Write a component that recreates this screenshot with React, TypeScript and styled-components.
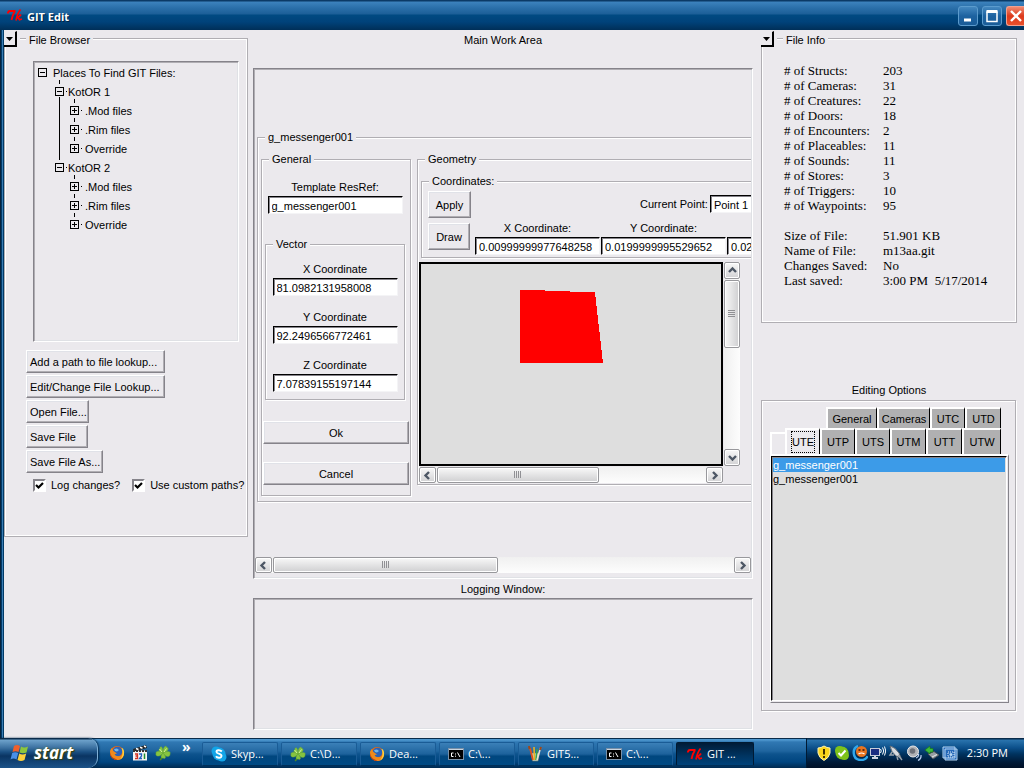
import React from 'react';
import styled, { createGlobalStyle, css } from 'styled-components';

const face = '#ebe9ed';
const shade = '#b0aeb3';
const dark = '#85838a';

const GlobalStyle = createGlobalStyle`
  * { box-sizing: border-box; }
  body {
    margin: 0;
    background: ${face};
    color: #000;
    font: 11px/14px "Liberation Sans", Arial, sans-serif;
  }
  button, input, select { font: inherit; color: inherit; border-radius: 0; margin: 0; }
  ul { list-style: none; margin: 0; padding: 0; }
`;

const Desktop = styled.div`
  display: flex;
  flex-direction: column;
  min-height: 100vh;
  overflow: hidden;
`;

/* ---------- window chrome ---------- */

const TitleBar = styled.header`
  display: flex;
  align-items: center;
  height: 30px;
  padding-left: 7px;
  gap: 4px;
  color: #fff;
  background: linear-gradient(#0b3a66 0 1px, #3c82bd 2px, #2a6fa9 8px, #1c5f98 14px, #004a82 15px, #00427a 22px, #002f58 30px);
`;

const Title = styled.h1`
  flex: 1;
  margin: 0;
  font: bold 11px/16px "Open Sans", "Noto Sans", sans-serif;
  padding-top: 4px;
  text-shadow: 1px 1px 0 #002447;
`;

const Caption = styled.div`
  display: flex;
  gap: 4px;
  padding-top: 2px;
`;

const CaptionButton = styled.button<{ $close?: boolean }>`
  display: grid;
  place-items: center;
  width: ${p => (p.$close ? 18 : 20)}px;
  height: 20px;
  padding: 0;
  border: 1px solid ${p => (p.$close ? '#f0a090' : '#5b9bcd')};
  border-radius: 3px;
  background: ${p => (p.$close ? 'linear-gradient(#f08a70, #dc3a1c 50%, #e8502c)' : 'linear-gradient(#4488c0, #1d62a0 50%, #1a5c98)')};
  ${p => p.$close && css`border-right: 0; border-radius: 3px 0 0 3px;`}
`;

const Workspace = styled.main`
  flex: 1;
  display: grid;
  grid-template-columns: 244px minmax(0, 1fr) 256px;
  padding: 0 7px 0 4px;
  background: linear-gradient(to right, #08223c 0 1px, #003a66 1px 2px, #3a7cb3 2px 3px, #003a66 3px 4px, ${face} 4px);
`;

/* ---------- shared widgets ---------- */

const Group = styled.fieldset<{ $width?: number }>`
  min-width: 0;
  margin: 0;
  padding: 0;
  ${p => p.$width && css`width: ${p.$width}px;`}
  border: 1px solid ${shade};
  box-shadow: 1px 1px 0 #fff, inset 1px 1px 0 #fff;
  > legend {
    margin-left: 7px;
    padding: 0 3px;
    line-height: 13px;
    background: ${face};
  }
`;

const PanelGroup = styled(Group)`
  box-shadow: inset 0 0 0 1px #fff;
  > legend {
    margin-left: 21px;
    padding: 4px 3px 0;
  }
`;

const PanelShell = styled.section`
  position: relative;
`;

const Collapse = styled.button`
  position: absolute;
  top: 1px;
  left: 0;
  display: grid;
  place-items: center;
  width: 13px;
  height: 16px;
  padding: 0;
  border: solid;
  border-width: 1px 2px 2px 0;
  border-color: ${face} #000 #000 #fff;
  background: ${face};
  box-shadow: 3px 3px 0 ${face};
`;

const TkButton = styled.button<{ $width?: number; $tall?: boolean; $center?: boolean }>`
  width: ${p => (p.$width ? `${p.$width}px` : 'auto')};
  height: ${p => (p.$tall ? 27 : 23)}px;
  padding: 0 3px;
  text-align: ${p => (p.$center ? 'center' : 'left')};
  white-space: nowrap;
  background: ${face};
  border: 1px solid;
  border-color: #fff ${dark} ${dark} #fff;
  box-shadow: inset -1px -1px 0 ${shade}, inset 1px 1px 0 #e0e2e8;
`;

const entry = css`
  height: 18px;
  padding: 1px 2px 0 3px;
  background: #fff;
  border: 1px solid;
  border-color: #000 #f4f4f6 #f4f4f6 #000;
  box-shadow: inset 1px 1px 0 ${dark};
  outline: none;
  appearance: none;
`;

const Entry = styled.input<{ $width: number }>`
  ${entry}
  width: ${p => p.$width}px;
`;

const Picker = styled.select`
  ${entry}
  width: 75px;
`;

const Sunken = styled.div`
  padding: 1px;
  border: 1px solid;
  border-color: ${dark} #fff #fff ${dark};
  box-shadow: inset 1px 1px 0 ${shade}, inset -1px -1px 0 #dfe1e5;
`;

const Heading = styled.h2`
  margin: 0;
  font-size: 11px;
  font-weight: normal;
  line-height: 14px;
  text-align: center;
`;

const Field = styled.label`
  display: flex;
  flex-direction: column;
  align-items: center;
  gap: 2px;
`;

/* ---------- scroll bar ---------- */

const Bar = styled.div<{ $vertical?: boolean }>`
  display: flex;
  gap: 1px;
  flex-direction: ${p => (p.$vertical ? 'column' : 'row')};
  ${p => (p.$vertical ? 'width: 16px;' : 'height: 16px;')}
  background: linear-gradient(${p => (p.$vertical ? 'to right' : 'to bottom')}, #f0f0f0, #fdfdfd);
`;

const barPart = css`
  display: grid;
  place-items: center;
  padding: 0;
  border: 1px solid #98989c;
  border-radius: 2px;
  box-shadow: inset 0 0 0 1px #fff;
`;

const Arrow = styled.button<{ $vertical: boolean }>`
  ${barPart}
  width: ${p => (p.$vertical ? 16 : 17)}px;
  height: ${p => (p.$vertical ? 17 : 16)}px;
  flex: none;
  background: linear-gradient(#f8f8f8, #d2d2d4);
`;

const Thumb = styled.div<{ $size: number; $vertical?: boolean }>`
  ${barPart}
  flex: 0 0 ${p => p.$size}px;
  background: linear-gradient(${p => (p.$vertical ? 'to right' : 'to bottom')}, #f8f8f8, #cfcfd1);
`;

const Track = styled.div`
  flex: 1;
`;

const arrows: Record<string, string> = {
  left: 'M6 1 2.500 4.500 6 8',
  right: 'M3 1 6.500 4.500 3 8',
  up: 'M1 6 4.500 2.500 8 6',
  down: 'M1 3 4.500 6.500 8 3',
};

function ArrowButton({ dir }: { dir: string }) {
  return (
    <Arrow type="button" $vertical={dir === 'up' || dir === 'down'} aria-label={`Scroll ${dir}`}>
      <svg width="9" height="9" viewBox="0 0 9 9">
        <path d={arrows[dir]} fill="none" stroke="#4d5765" strokeWidth="2.400" />
      </svg>
    </Arrow>
  );
}

function ScrollBar({ vertical, thumb }: { vertical?: boolean; thumb: number }) {
  return (
    <Bar $vertical={vertical}>
      <ArrowButton dir={vertical ? 'up' : 'left'} />
      <Thumb $vertical={vertical} $size={thumb}>
        <svg width="8" height="8" viewBox="0 0 8 8" shapeRendering="crispEdges">
          <path
            d={vertical ? 'M0 .5H7M0 2.500H7M0 4.500H7M0 6.500H7' : 'M.5 0V7M2.500 0V7M4.500 0V7M6.500 0V7'}
            stroke="#909094"
          />
        </svg>
      </Thumb>
      <Track />
      <ArrowButton dir={vertical ? 'down' : 'right'} />
    </Bar>
  );
}

/* ---------- file browser ---------- */

const BrowserBody = styled.div`
  display: flex;
  flex-direction: column;
  align-items: flex-start;
  gap: 2px;
  padding: 14px 0 44px 21px;
`;

const TreeBox = styled(Sunken)`
  width: 206px;
  min-height: 281px;
  margin: 0 0 6px 7px;
`;

const TreeRow = styled.div<{ $level: number }>`
  position: relative;
  display: flex;
  align-items: center;
  height: 19px;
  padding-left: ${p => [3, 20, 35][p.$level]}px;
  ${p => p.$level > 0 && css`
    &::before {
      content: '';
      position: absolute;
      top: -2px;
      left: ${[0, 24, 39][p.$level]}px;
      height: 4px;
      border-left: 1px solid #000;
    }
  `}
`;

const Branch = styled.ul<{ $line?: boolean }>`
  position: relative;
  ${p => p.$line && css`
    &::before {
      content: '';
      position: absolute;
      top: -4px;
      bottom: -2px;
      left: 24px;
      border-left: 1px solid #000;
    }
  `}
`;

const Toggle = styled.button`
  display: grid;
  width: 9px;
  height: 9px;
  padding: 0;
  border: 0;
  background: ${face};
`;

const Leader = styled.i<{ $wide?: boolean; $dot?: boolean }>`
  width: ${p => (p.$wide ? 6 : 4)}px;
  height: 1px;
  background: ${p => (p.$dot ? 'linear-gradient(to right, transparent 2px, #000 2px 3px, transparent 3px)' : 'none')};
`;

function Node({ level, open, label }: { level: number; open?: boolean; label: string }) {
  return (
    <TreeRow $level={level}>
      <Toggle type="button" aria-label={`${open ? 'Collapse' : 'Expand'} ${label}`}>
        <svg width="9" height="9" viewBox="0 0 9 9" shapeRendering="crispEdges">
          <path d={`M.5 .5h8v8h-8zM2 4.500h5${open ? '' : 'M4.500 2v5'}`} fill="none" stroke="#000" />
        </svg>
      </Toggle>
      <Leader $wide={level !== 1} $dot={level > 0} />
      <span>{label}</span>
    </TreeRow>
  );
}

const Checks = styled.div`
  display: flex;
  gap: 12px;
  margin: 3px 0 0 7px;
`;

const Check = styled.label`
  display: flex;
  align-items: center;
  gap: 5px;
  white-space: nowrap;
`;

const Tick = styled.input`
  appearance: none;
  width: 13px;
  height: 13px;
  background: #fff;
  border: 2px solid;
  border-color: ${dark} #fff #fff ${dark};
  &:checked {
    background: #fff url("data:image/svg+xml,%3Csvg xmlns='http://www.w3.org/2000/svg' width='9' height='9'%3E%3Cpath d='M1 4l2.500 2.500L8 2' fill='none' stroke='%23000' stroke-width='2.200'/%3E%3C/svg%3E") center no-repeat;
  }
`;

function FileBrowser() {
  return (
    <PanelShell>
      <PanelGroup>
        <legend>File Browser</legend>
        <BrowserBody>
          <TreeBox>
            <Node level={0} open label="Places To Find GIT Files:" />
            <ul>
              {['KotOR 1', 'KotOR 2'].map((game, i) => (
                <li key={game}>
                  <Node level={1} open label={game} />
                  <Branch $line={i === 0}>
                    {['.Mod files', '.Rim files', 'Override'].map(name => (
                      <li key={name}><Node level={2} label={name} /></li>
                    ))}
                  </Branch>
                </li>
              ))}
            </ul>
          </TreeBox>
          <TkButton $width={139}>Add a path to file lookup...</TkButton>
          <TkButton $width={139}>Edit/Change File Lookup...</TkButton>
          <TkButton $width={63}>Open File...</TkButton>
          <TkButton $width={62}>Save File</TkButton>
          <TkButton $width={77}>Save File As...</TkButton>
          <Checks>
            <Check><Tick type="checkbox" defaultChecked />Log changes?</Check>
            <Check><Tick type="checkbox" defaultChecked />Use custom paths?</Check>
          </Checks>
        </BrowserBody>
      </PanelGroup>
      <Collapse type="button" aria-label="Collapse File Browser"><Triangle /></Collapse>
    </PanelShell>
  );
}

function Triangle() {
  return (
    <svg width="7" height="4" viewBox="0 0 7 4"><path d="M0 0h7L3.500 4z" /></svg>
  );
}

/* ---------- main work area ---------- */

const Center = styled.section`
  display: flex;
  flex-direction: column;
  min-width: 0;
  padding: 3px 8px 8px 5px;
`;

const WorkFrame = styled(Sunken)`
  margin: 21px 0 3px;
  padding-bottom: 5px;
`;

const WorkView = styled.div`
  overflow: hidden;
  padding: 61px 0 55px 2px;
`;

const Editor = styled(Group)`
  width: 640px;
`;

const EditorBody = styled.div`
  display: flex;
  align-items: flex-start;
  gap: 6px;
  padding: 9px 3px 5px;
`;

const GeneralBody = styled.div`
  display: flex;
  flex-direction: column;
  align-items: center;
  padding: 14px 1px 10px;
  > :not(:last-child) { margin-right: 2px; }
`;

const VectorGroup = styled(Group)`
  margin: 24px 0 21px;
`;

const VectorBody = styled.div`
  display: flex;
  flex-direction: column;
  gap: 14px;
  padding: 11px 0 7px;
`;

const Actions = styled.div`
  display: flex;
  flex-direction: column;
  gap: 18px;
`;

const GeometryBody = styled.div`
  display: flex;
  flex-direction: column;
  gap: 4px;
  padding: 9px 1px 1px;
`;

const CoordsGroup = styled(Group)`
  margin-left: 2px;
`;

const CoordsBody = styled.div`
  display: flex;
  gap: 4px;
  padding: 3px 6px 2px;
`;

const CoordsButtons = styled.div`
  display: flex;
  flex-direction: column;
  gap: 5px;
`;

const CoordsFields = styled.div`
  display: flex;
  flex-direction: column;
  gap: 8px;
  padding-top: 4px;
`;

const PointRow = styled.label`
  display: flex;
  align-items: center;
  gap: 2px;
  padding-left: 165px;
`;

const FieldRow = styled.div`
  display: flex;
  align-items: flex-end;
  gap: 1px;
`;

const CanvasGrid = styled.div`
  display: grid;
  grid-template-columns: 304px 16px;
  gap: 1px;
`;

const Canvas = styled.div`
  height: 204px;
  border: 2px solid #000;
  background: #dedede;
  svg { display: block; }
`;

const LogBox = styled(Sunken)`
  flex: 1;
  margin-top: 2px;
`;

function WorkArea() {
  return (
    <Center>
      <Heading>Main Work Area</Heading>
      <WorkFrame>
        <WorkView>
          <Editor>
            <legend>g_messenger001</legend>
            <EditorBody>
              <Group $width={150}>
                <legend>General</legend>
                <GeneralBody>
                  <Field>Template ResRef:<Entry $width={135} defaultValue="g_messenger001" /></Field>
                  <VectorGroup $width={140}>
                    <legend>Vector</legend>
                    <VectorBody>
                      <Field>X Coordinate<Entry $width={125} defaultValue="81.0982131958008" /></Field>
                      <Field>Y Coordinate<Entry $width={125} defaultValue="92.2496566772461" /></Field>
                      <Field>Z Coordinate<Entry $width={125} defaultValue="7.07839155197144" /></Field>
                    </VectorBody>
                  </VectorGroup>
                  <Actions>
                    <TkButton $width={146} $center>Ok</TkButton>
                    <TkButton $width={146} $center>Cancel</TkButton>
                  </Actions>
                </GeneralBody>
              </Group>
              <Group $width={460}>
                <legend>Geometry</legend>
                <GeometryBody>
                  <CoordsGroup>
                    <legend>Coordinates:</legend>
                    <CoordsBody>
                      <CoordsButtons>
                        <TkButton $tall $center $width={43}>Apply</TkButton>
                        <TkButton $tall $center $width={42}>Draw</TkButton>
                      </CoordsButtons>
                      <CoordsFields>
                        <PointRow>
                          Current Point:
                          <Picker><option>Point 1</option></Picker>
                        </PointRow>
                        <FieldRow>
                          <Field>X Coordinate:<Entry $width={125} defaultValue="0.00999999977648258" /></Field>
                          <Field>Y Coordinate:<Entry $width={125} defaultValue="0.0199999995529652" /></Field>
                          <Entry $width={125} aria-label="Z coordinate" defaultValue="0.02" />
                        </FieldRow>
                      </CoordsFields>
                    </CoordsBody>
                  </CoordsGroup>
                  <CanvasGrid>
                    <Canvas>
                      <svg width="300" height="200" viewBox="0 0 300 200" shapeRendering="crispEdges">
                        <path d="M99 26 124 26 124 27 149 27 149 28 173 28 174 29 182 99H99z" fill="#f00" />
                      </svg>
                    </Canvas>
                    <ScrollBar vertical thumb={68} />
                    <ScrollBar thumb={162} />
                  </CanvasGrid>
                </GeometryBody>
              </Group>
            </EditorBody>
          </Editor>
        </WorkView>
        <ScrollBar thumb={225} />
      </WorkFrame>
      <Heading>Logging Window:</Heading>
      <LogBox />
    </Center>
  );
}

/* ---------- right column ---------- */

const InfoTable = styled.table`
  margin: 16px 0 34px 22px;
  border-collapse: collapse;
  font: 13px/15px "Liberation Serif", "Times New Roman", serif;
  th, td { padding: 0; height: 15px; text-align: left; font-weight: normal; white-space: pre; }
  th { width: 99px; }
  tbody + tbody::before { content: ''; display: block; height: 15px; }
`;

const counts = [
  ['# of Structs:', '203'], ['# of Cameras:', '31'], ['# of Creatures:', '22'], ['# of Doors:', '18'],
  ['# of Encounters:', '2'], ['# of Placeables:', '11'], ['# of Sounds:', '11'], ['# of Stores:', '3'],
  ['# of Triggers:', '10'], ['# of Waypoints:', '95'],
];
const details = [
  ['Size of File:', '51.901 KB'], ['Name of File:', 'm13aa.git'], ['Changes Saved:', 'No'],
  ['Last saved:', '3:00 PM  5/17/2014'],
];

const OptionsTitle = styled(Heading)`
  margin: 60px 0 3px;
`;

const OptionsFrame = styled.div`
  margin-right: 1px;
  padding: 6px 6px 7px 8px;
  border: 1px solid ${shade};
  box-shadow: 1px 1px 0 #fff, inset 1px 1px 0 #fff;
`;

const TabRow = styled.div<{ $back?: boolean }>`
  display: flex;
  align-items: flex-end;
  height: ${p => (p.$back ? 21 : 26)}px;
  padding-right: 8px;
  justify-content: flex-end;
`;

const TabStub = styled.i`
  flex: 1;
  height: 22px;
  border: solid #fff;
  border-width: 2px 0 0 2px;
`;

const Tab = styled.button<{ $width: number; $active?: boolean }>`
  width: ${p => p.$width}px;
  height: 100%;
  padding: 0;
  border: solid;
  border-width: 2px 1px 0 2px;
  border-color: #fff #000 transparent #fff;
  background: ${p => (p.$active ? face : '#b0b0b1')};
  span {
    display: inline-block;
    padding: 3px 0;
    outline: ${p => (p.$active ? '1px dotted #000' : 'none')};
  }
`;

const ListFrame = styled.div`
  border: solid;
  border-width: 2px 1px 1px 1px;
  border-color: #fff ${dark} ${dark} #fff;
  padding: 0 1px 1px 0;
`;

const List = styled.ul`
  && {
    min-height: 245px;
    padding: 1px;
    border: 1px solid;
    border-color: #000 #fff #fff #000;
    box-shadow: inset 1px 1px 0 ${dark};
    background: #dedede;
  }
`;

const ListItem = styled.li<{ $selected?: boolean }>`
  height: 14px;
  ${p => p.$selected && css`background: #3c9be8; color: #fff;`}
`;

function RightColumn() {
  return (
    <div>
      <PanelShell>
        <PanelGroup>
          <legend>File Info</legend>
          <InfoTable>
            {[counts, details].map((rows, i) => (
              <tbody key={i}>
                {rows.map(([k, v]) => (
                  <tr key={k}><th scope="row">{k}</th><td>{v}</td></tr>
                ))}
              </tbody>
            ))}
          </InfoTable>
        </PanelGroup>
        <Collapse type="button" aria-label="Collapse File Info"><Triangle /></Collapse>
      </PanelShell>
      <OptionsTitle>Editing Options</OptionsTitle>
      <OptionsFrame>
        <TabRow $back>
          <Tab $width={51}><span>General</span></Tab>
          <Tab $width={53}><span>Cameras</span></Tab>
          <Tab $width={35}><span>UTC</span></Tab>
          <Tab $width={36}><span>UTD</span></Tab>
        </TabRow>
        <TabRow>
          <TabStub />
          <Tab $width={35} $active><span>UTE</span></Tab>
          <Tab $width={35}><span>UTP</span></Tab>
          <Tab $width={35}><span>UTS</span></Tab>
          <Tab $width={36}><span>UTM</span></Tab>
          <Tab $width={36}><span>UTT</span></Tab>
          <Tab $width={39}><span>UTW</span></Tab>
        </TabRow>
        <ListFrame>
          <List>
            <ListItem $selected>g_messenger001</ListItem>
            <ListItem>g_messenger001</ListItem>
          </List>
        </ListFrame>
      </OptionsFrame>
    </div>
  );
}

/* ---------- task bar ---------- */

const TaskBar = styled.footer`
  display: flex;
  height: 30px;
  color: #fff;
  font: 11px/16px "Open Sans", "Noto Sans", sans-serif;
  background: linear-gradient(#0a2b4a 0 1px, #4e97cf 1px 2px, #3078b3 4px, #1f659f 13px, #0d538d 16px, #004580 24px, #002a50 30px);
`;

const StartButton = styled.button`
  display: flex;
  align-items: center;
  gap: 4px;
  width: 98px;
  padding: 0 0 0 10px;
  border: 0;
  border-right: 1px solid #7fb0d6;
  border-radius: 0 10px 10px 0;
  background: linear-gradient(#0a2b4a 0 1px, #6ea2cb 2px, #3a6f9f 10px, #1a4f82 14px, #0a3462 18px, #1c5288 30px);
  box-shadow: 1px 0 2px #00284d;
  span {
    font: italic bold 17px/20px "Open Sans", "Noto Sans", sans-serif;
    color: #fff;
    text-shadow: 1px 1px 1px #2c3a10, 0 0 2px #6b7a20;
  }
`;

const QuickLaunch = styled.nav`
  display: flex;
  align-items: center;
  gap: 7px;
  width: 104px;
  padding-left: 11px;
  a { display: grid; color: #fff; text-decoration: none; }
`;

const More = styled.button`
  align-self: flex-start;
  padding: 1px 0 0 4px;
  border: 0;
  background: none;
  font-weight: bold;
  font-size: 14px;
`;

const Tasks = styled.div`
  flex: 1;
  display: flex;
  align-items: center;
  gap: 3px;
  padding-top: 1px;
`;

const Task = styled.button<{ $active?: boolean }>`
  display: flex;
  align-items: center;
  gap: 4px;
  width: ${p => (p.$active ? 78 : 76)}px;
  height: 24px;
  padding: 0 0 0 ${p => (p.$active ? 10 : 8)}px;
  white-space: nowrap;
  border: 1px solid ${p => (p.$active ? '#001a33' : '#1a5c96')};
  border-bottom-color: #002f58;
  border-radius: 2px;
  background: ${p => (p.$active ? 'linear-gradient(#001c38, #003562 60%, #00427a)' : 'linear-gradient(#3b80b8, #1d629c 50%, #00467e 60%, #004a84)')};
`;

const Tray = styled.div`
  display: flex;
  align-items: center;
  gap: 2px;
  width: 218px;
  padding: 0 16px 0 9px;
  border-left: 1px solid #001a33;
  background: linear-gradient(#0a2b4a 0 1px, #2a74ae 2px, #0b4f8a 10px, #00335f 16px, #001a38 24px, #001026 30px);
`;

const Clock = styled.time`
  flex: 1;
  text-align: right;
  white-space: nowrap;
`;

const Svg = ({ children, size = 16 }: { children: React.ReactNode; size?: number }) => (
  <svg width={size} height={size} viewBox="0 0 16 16" aria-hidden="true">{children}</svg>
);

const TkLogo = () => (
  <Svg>
    <path d="M.8 6.500Q1 4 3 4H8.500M8 4Q5.500 8 4.500 13" fill="none" stroke="#ff0000" strokeWidth="1.900" />
    <path d="M13.500 2.500Q10.500 6 9 13.500M9.500 11Q13 9.500 14 7.500M11 10.500 12.500 12.800 15 12" fill="none" stroke="#ff0000" strokeWidth="1.700" />
  </Svg>
);

const Firefox = () => (
  <Svg>
    <circle cx="8" cy="8" r="7" fill="#e66a12" />
    <circle cx="8.500" cy="6.500" r="4.800" fill="#2b62b8" />
    <path d="M5 4 8 3.500 10 5 8 6.500 6 6z" fill="#6fb7ea" />
    <path d="M1 6C1 12 5 15 9 15s6.500-4 6-8.500C14 10 11 12 8 11S5 9 8 8.500L4.500 6 2.500 3z" fill="#f08a1c" />
    <path d="M14 3.500C16 7 15.500 12 11 14.500 14 11 14 7 12.500 3z" fill="#ffd23c" />
    <path d="M1 7C2 12 5 14 8 14L7 15C3 14 1 11 1 7z" fill="#c83a10" />
  </Svg>
);

const Clapper = () => (
  <Svg>
    <rect x="1" y="5.500" width="14" height="10" fill="#f4f4f4" />
    <path d="M1 4 14 0 15 3 2 6.500z" fill="#222" />
    <path d="M4 3.500 6.500 4.500M8 2.300 10.500 3.300M12 1 14 2" stroke="#fff" strokeWidth="1.500" />
    <path d="M1 6H15" stroke="#333" strokeDasharray="2 1" strokeWidth="2" />
    <path d="M3 9H5.500V11H3.500M5.500 11V13.500H3" fill="none" stroke="#d03020" strokeWidth="1.300" />
    <path d="M7 9H9.500V11L7.500 13.500H10" fill="none" stroke="#2060c0" strokeWidth="1.300" />
    <path d="M12.500 8.500V14" stroke="#209030" strokeWidth="1.500" />
  </Svg>
);

const Clover = () => (
  <Svg>
    <path d="M8 9Q8 13 5 15" fill="none" stroke="#4c8a20" strokeWidth="1.500" />
    <g fill="#86c440" stroke="#68a834" strokeWidth=".5">
      <path d="M8 8C3 7.500 3.500 4 5 3.500 4.500 1 8 0 8 8z" />
      <path d="M8 8C8 1 11 0 12 2.500 14.500 3 13 7 8 8z" />
      <path d="M8 8C3 5 .5 6.500 1 8.500 0 11 4 13 8 8z" />
      <path d="M8 8C14 5 16 7 15 9 15.500 12 11 13 8 8z" />
      <path d="M8 8C5 11 6 13.500 8 13 10.500 14.500 12 12 8 8z" />
    </g>
    <path d="M4.500 4 7 7M11.500 3.500 9 7" stroke="#d2f0a0" />
  </Svg>
);

const Skype = () => (
  <Svg>
    <circle cx="8" cy="8" r="6.500" fill="#12a5e8" />
    <circle cx="5" cy="5" r="4.500" fill="#12a5e8" />
    <circle cx="11" cy="11" r="4.500" fill="#12a5e8" />
    <path d="M10.800 5.500C9 3.500 5.300 4 5.500 6S10.800 7.500 10.500 10 6 12 5 10.200" fill="none" stroke="#fff" strokeWidth="1.900" />
  </Svg>
);

const Console = () => (
  <Svg>
    <rect x=".5" y="2.500" width="15" height="11" fill="#000" stroke="#7890a8" />
    <path d="M1 3.500H15" stroke="#c8d4e0" />
    <path d="M5.500 7H3.500V10.500H5.500M7.500 7.500V8.500M7.500 9.700V10.700M9.500 6.500 12 11" fill="none" stroke="#fff" />
  </Svg>
);

const Brushes = () => (
  <Svg>
    <path d="M4 7 5.500 15H11L12.500 7z" fill="#c8d4c8" stroke="#687868" strokeWidth=".6" />
    <path d="M6 14 3 2" stroke="#e0501c" strokeWidth="1.800" />
    <path d="M7.500 14 7 1" stroke="#e8b020" strokeWidth="1.600" />
    <path d="M9 14 10 3" stroke="#38a048" strokeWidth="1.600" />
    <path d="M10 14 13.500 2" stroke="#e8e0d0" strokeWidth="1.600" />
    <path d="M2.500 3 2 0M13 4 14 1" stroke="#a04818" strokeWidth="2" />
  </Svg>
);

const Flag = () => (
  <svg width="20" height="20" viewBox="0 0 20 20" aria-hidden="true">
    <path d="M4 3Q7 1 10 3L8.500 9Q5.500 7.500 2.500 9z" fill="#f0602c" />
    <path d="M11 3.500Q14 5.500 18 3.500L16.500 9.500Q13 11 9.500 9.500z" fill="#8cc63c" />
    <path d="M2.200 10Q5 8.500 8.200 10L6.500 16.500Q3.500 14.500 .5 16.500z" fill="#4a90e8" />
    <path d="M9.200 10.500Q12.500 12.500 16.200 10.500L14.500 17Q11 19 7.500 17z" fill="#fcd03c" />
  </svg>
);

const trayIcons: React.ReactNode[] = [
  <>
    <path d="M8 1Q11 3 14 3V8Q13 13 8 15.500 3 13 2 8V3Q5 3 8 1z" fill="#fbd51c" stroke="#fff3b0" />
    <path d="M8 4V9.500M8 11V13" stroke="#403000" strokeWidth="2" />
  </>,
  <>
    <circle cx="5.500" cy="5.500" r="4.500" fill="#7ec21a" /><circle cx="10.500" cy="10.500" r="4.500" fill="#7ec21a" />
    <circle cx="8" cy="8" r="6.500" fill="#7ec21a" />
    <path d="M4.500 8 7 10.500 11.500 5.500" fill="none" stroke="#fff" strokeWidth="2" />
  </>,
  <>
    <path d="M6 1C0 3 0 14 8 15 12 15.500 15 13 15.500 11" fill="none" stroke="#30a8ec" strokeWidth="2.400" />
    <circle cx="9.500" cy="6.500" r="5.500" fill="#e87420" />
    <path d="M6.500 5H8.500M10.500 5H12.500" stroke="#3a1808" strokeWidth="1.500" />
    <path d="M6.500 9Q9.500 7 12.500 9" fill="none" stroke="#fff" strokeWidth="1.200" />
  </>,
  <>
    <rect x=".5" y="3.500" width="9" height="7" fill="#1a2c80" stroke="#c8ccd8" />
    <path d="M2 13H8M5 11V13" stroke="#d0d4e0" strokeWidth="2" />
    <path d="M10.500 4Q12 6 10.500 8M12.500 2.500Q15 6 12.500 9.500M14.500 1.500Q17 6 14.500 10.500" fill="none" stroke="#fff" />
  </>,
  <>
    <path d="M2 1Q7 2 11 8L13 13 8 11Q3 7 2 1z" fill="#d8dce0" stroke="#606a74" />
    <path d="M4 7 2 10 6 10M10 10 14 15M9 12 10 15" fill="none" stroke="#9aa4ac" strokeWidth="1.400" />
  </>,
  <>
    <circle cx="7" cy="6.500" r="5.500" fill="#b0b2b6" stroke="#e8e8ea" />
    <circle cx="6.500" cy="6" r="2.800" fill="#6c7078" />
    <path d="M10 13Q13 12 12.500 9M12 15.500Q15.500 14 15 10" fill="none" stroke="#b8ccf0" strokeWidth="1.200" />
  </>,
  <>
    <path d="M4 9 10 6.500 15 10 9 14z" fill="#989ea4" stroke="#4a5058" />
    <path d="M1 5 6 1V3.500H9V7H6V9z" fill="#3cb83c" stroke="#147814" strokeWidth=".6" />
    <path d="M8 12 13 9.500" stroke="#e8e8e8" />
  </>,
  <>
    <path d="M1 2H13V13H1zM3 4H15V15H3z" fill="#2468b8" stroke="#b8d8f4" />
    <path d="M6 7H12V12H6z" fill="none" stroke="#e0ecf8" strokeDasharray="1 1" />
    <circle cx="9" cy="9.500" r="1.500" fill="#b8d8f4" />
  </>,
];

const tasks: [React.ReactNode, string][] = [
  [<Skype />, 'Skyp...'],
  [<Clover />, 'C:\\D...'],
  [<Firefox />, 'Dea...'],
  [<Console />, 'C:\\...'],
  [<Brushes />, 'GIT5...'],
  [<Console />, 'C:\\...'],
  [<TkLogo />, 'GIT ...'],
];

export default function App() {
  return (
    <Desktop>
      <GlobalStyle />
      <TitleBar>
        <TkLogo />
        <Title>GIT Edit</Title>
        <Caption>
          <CaptionButton aria-label="Minimize">
            <svg width="14" height="14" viewBox="0 0 14 14"><path d="M3 11H10" stroke="#fff" strokeWidth="3" /></svg>
          </CaptionButton>
          <CaptionButton aria-label="Maximize">
            <svg width="14" height="14" viewBox="0 0 14 14"><path d="M2 2.500V12.500H12V2.500M1.500 3H12.500" fill="none" stroke="#fff" strokeWidth="1.500" /><path d="M1.500 2.500H12.500" stroke="#fff" strokeWidth="3" /></svg>
          </CaptionButton>
          <CaptionButton $close aria-label="Close">
            <svg width="14" height="14" viewBox="0 0 14 14"><path d="M2 2 12 12M12 2 2 12" stroke="#fff" strokeWidth="2.400" /></svg>
          </CaptionButton>
        </Caption>
      </TitleBar>
      <Workspace>
        <FileBrowser />
        <WorkArea />
        <RightColumn />
      </Workspace>
      <TaskBar>
        <StartButton><Flag /><span>start</span></StartButton>
        <QuickLaunch>
          <a href="#firefox" aria-label="Firefox"><Firefox /></a>
          <a href="#movies" aria-label="Movies"><Clapper /></a>
          <a href="#clover" aria-label="Clover"><Clover /></a>
          <More type="button">»</More>
        </QuickLaunch>
        <Tasks>
          {tasks.map(([icon, label], i) => (
            <Task key={i} $active={i === tasks.length - 1}>{icon}<span>{label}</span></Task>
          ))}
        </Tasks>
        <Tray>
          {trayIcons.map((icon, i) => <Svg key={i}>{icon}</Svg>)}
          <Clock>2:30 PM</Clock>
        </Tray>
      </TaskBar>
    </Desktop>
  );
}
